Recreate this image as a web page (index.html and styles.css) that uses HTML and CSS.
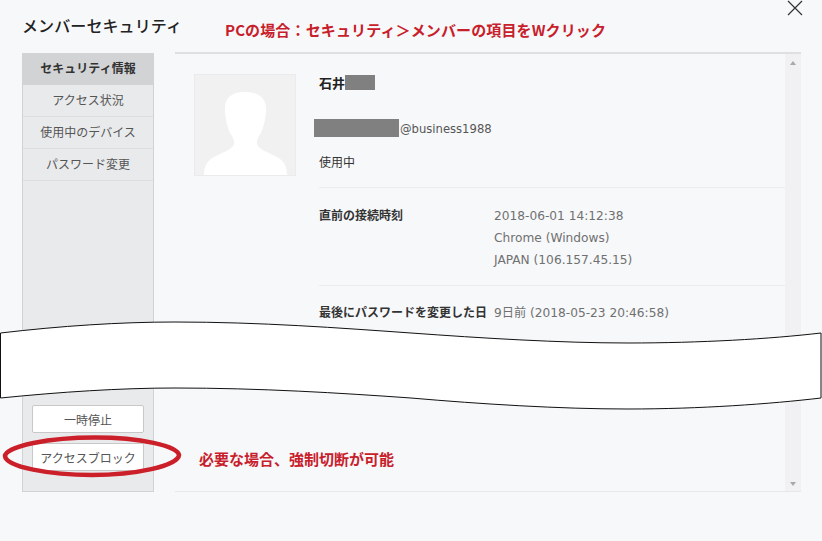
FILE: index.html
```
<!DOCTYPE html>
<html lang="ja">
<head>
<meta charset="utf-8">
<title>メンバーセキュリティ</title>
<link rel="stylesheet" href="styles.css">
</head>
<body>
<div class="page">
  <header class="head">
    <h1 class="title">メンバーセキュリティ</h1>
    <svg class="close" viewBox="0 0 16 16" width="16" height="16"><path d="M1 1L15 15M15 1L1 15" stroke="#333" stroke-width="1.2" fill="none"/></svg>
  </header>
  <main class="main">
    <nav class="side">
      <a class="item active">セキュリティ情報</a>
      <a class="item">アクセス状況</a>
      <a class="item">使用中のデバイス</a>
      <a class="item">パスワード変更</a>
      <div class="actions">
        <button class="btn">一時停止</button>
        <button class="btn">アクセスブロック</button>
      </div>
    </nav>
    <section class="panel">
      <div class="body">
        <div class="profile">
          <svg class="avatar" viewBox="0 0 102 102" width="102" height="102">
            <rect x="0.5" y="0.5" width="101" height="101" fill="#f1f1f2" stroke="#ebebed"/>
            <path d="M10 101C10 92 13 87 20 83C28 79 36 76 39 72C41 69 40 66 38 62C34 56 32 48 31 38C30 25 36 18 51 18C66 18 73 25 72 38C71 48 69 56 65 62C63 66 62 69 64 72C67 76 75 79 83 83C90 87 93 92 93 101Z" fill="#fff"/>
          </svg>
          <div class="info">
            <div class="name">石井<span class="mask mask-name"></span></div>
            <div class="mail"><span class="mask mask-mail"></span><span class="addr">@business1988</span></div>
            <div class="status">使用中</div>
          </div>
        </div>
        <div class="rows">
          <div class="row first">
            <div class="label">直前の接続時刻</div>
            <div class="value">2018-06-01 14:12:38<br>Chrome (Windows)<br>JAPAN (106.157.45.15)</div>
          </div>
          <div class="row">
            <div class="label">最後にパスワードを変更した日</div>
            <div class="value">9日前 (2018-05-23 20:46:58)</div>
          </div>
        </div>
      </div>
      <div class="scroll"><i class="up"></i><i class="down"></i></div>
    </section>
  </main>

  <svg class="overlay" viewBox="0 0 822 541" width="822" height="541">
    <path d="M0.5 333C60 326 120 322 175 322C260 322 340 328 411 333C480 338 560 343 628 343C700 343 770 339 821 333V398C770 404 700 409 628 409C560 409 480 404 411 398C340 393 260 388 175 388C120 388 60 392 0.5 398Z" fill="#fff" stroke="#111" stroke-width="1"/>
    <path d="M5 456C6 446 50 437.5 95 437.5C140 437.5 178 446 179 455C178 466 135 475 92 475C50 475 6 467 5 456Z" fill="none" stroke="#cb1f2a" stroke-width="4.5"/>
  </svg>
  <p class="note note-top">PCの場合：セキュリティ＞メンバーの項目をWクリック</p>
  <p class="note note-bottom">必要な場合、強制切断が可能</p>
</div>
</body>
</html>
```
FILE: styles.css
```
* { box-sizing: border-box; }
html, body { margin: 0; padding: 0; }
body {
  background: #f7f8fa;
  font-family: "DejaVu Sans", "Noto Sans CJK JP", sans-serif;
  font-size: 12px;
  color: #555;
}
.page {
  position: relative;
  width: 822px;
  height: 541px;
  overflow: hidden;
}
.head {
  height: 52px;
  padding-left: 22px;
}
.title {
  margin: 0;
  padding-top: 13px;
  font-size: 16px;
  line-height: 24px;
  font-weight: 500;
  letter-spacing: 0.1px;
  color: #222;
  font-family: "Noto Sans CJK JP", sans-serif;
}
.close { position: absolute; left: 787px; top: 0; }
.main {
  display: flex;
  gap: 21px;
  padding-left: 22px;
}
.side {
  display: flex;
  flex-direction: column;
  width: 132px;
  height: 439px;
  margin-top: 1px;
  background: #e9eaec;
  border: 1px solid #cfd3d3;
  border-top: 0;
}
.item {
  height: 32px;
  line-height: 29px;
  border-bottom: 1px solid #dcdde0;
  text-align: center;
  font-family: "Noto Sans CJK JP", sans-serif;
  font-size: 12px;
  color: #555;
}
.item.active {
  background: #d2d3d5;
  color: #333;
  font-weight: 700;
  border-bottom: 0;
}
.actions {
  display: flex;
  flex-direction: column;
  gap: 10px;
  margin-top: auto;
  padding: 0 9px 20px;
}
.btn {
  height: 28px;
  padding: 0;
  background: #fff;
  border: 1px solid #c8c8c8;
  border-radius: 2px;
  font-family: "Noto Sans CJK JP", sans-serif;
  font-size: 12px;
  color: #555;
}
.panel {
  display: flex;
  width: 626px;
  height: 440px;
  border-top: 2px solid #dfdfe2;
  border-bottom: 1px solid #e6e7e9;
}
.body {
  flex: 1;
  padding: 20px 0 0 19px;
}
.profile { display: flex; gap: 23px; }
.avatar { display: block; flex: none; }
.info { display: flex; flex-direction: column; }
.name {
  height: 20px;
  line-height: 18px;
  font-size: 13px;
  font-weight: 700;
  color: #222;
  font-family: "Noto Sans CJK JP", sans-serif;
}
.mail {
  display: flex;
  align-items: center;
  height: 20px;
  margin: 24px 0 14px -5px;
  font-size: 11.6px;
}
.addr { line-height: 22px; padding-top: 1px; }
.status {
  height: 20px;
  line-height: 20px;
  color: #333;
  font-family: "Noto Sans CJK JP", sans-serif;
}
.mask {
  display: inline-block;
  background: #808080;
}
.mask-name { width: 30px; height: 15px; vertical-align: -2px; }
.mask-mail { width: 85px; height: 18px; margin-right: 1px; }
.rows { margin-left: 125px; }
.row {
  display: flex;
  padding: 15px 0;
  border-top: 1px solid #ecedef;
  line-height: 22px;
}
.row.first { margin-top: 11px; padding: 16px 0 14px; }
.label {
  width: 175px;
  flex: none;
  font-weight: 700;
  color: #333;
  font-family: "Noto Sans CJK JP", sans-serif;
  white-space: nowrap;
}
.value { padding-top: 1px; font-size: 12.2px; color: #707070; white-space: nowrap; }
.scroll {
  display: flex;
  flex-direction: column;
  justify-content: space-between;
  align-items: center;
  width: 16px;
  flex: none;
  padding: 7px 0 5px;
  background: #f1f1f3;
}
.up, .down {
  width: 0;
  height: 0;
  border-left: 3.5px solid transparent;
  border-right: 3.5px solid transparent;
}
.up { border-bottom: 4px solid #a8a8a8; }
.down { border-top: 4px solid #a8a8a8; }
.overlay { position: absolute; left: 0; top: 0; pointer-events: none; }
.note {
  position: absolute;
  margin: 0;
  font-family: "Noto Sans CJK JP", sans-serif;
  font-size: 15px;
  line-height: 20px;
  font-weight: 700;
  color: #c8202a;
  white-space: nowrap;
}
.note-top { left: 225px; top: 20px; letter-spacing: 0.13px; }
.note-bottom { left: 199px; top: 449px; }
```
